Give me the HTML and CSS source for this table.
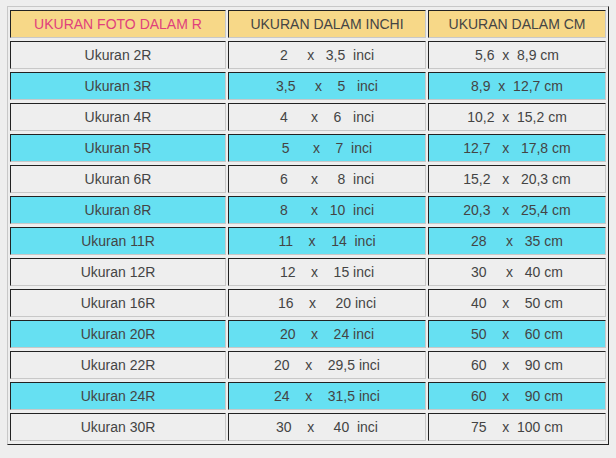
FILE: index.html
```html
<!DOCTYPE html>
<html>
<head>
<meta charset="utf-8">
<link rel="stylesheet" href="styles.css">
</head>
<body>
<table class="sizes">
  <thead>
    <tr class="head">
      <th class="c1 accent">UKURAN FOTO DALAM R</th>
      <th class="c2">UKURAN DALAM INCHI</th>
      <th class="c3">UKURAN DALAM CM</th>
    </tr>
  </thead>
  <tbody>
    <tr><td class="c1">Ukuran 2R</td><td class="c2">2     x   3,5  inci</td><td class="c3">5,6  x  8,9 cm</td></tr>
    <tr class="hi"><td class="c1">Ukuran 3R</td><td class="c2">3,5     x    5   inci</td><td class="c3">8,9  x  12,7 cm</td></tr>
    <tr><td class="c1">Ukuran 4R</td><td class="c2">4      x    6   inci</td><td class="c3">10,2  x  15,2 cm</td></tr>
    <tr class="hi"><td class="c1">Ukuran 5R</td><td class="c2">5      x    7  inci</td><td class="c3">12,7   x   17,8 cm</td></tr>
    <tr><td class="c1">Ukuran 6R</td><td class="c2">6      x     8  inci</td><td class="c3">15,2   x   20,3 cm</td></tr>
    <tr class="hi"><td class="c1">Ukuran 8R</td><td class="c2">8      x   10  inci</td><td class="c3">20,3   x   25,4 cm</td></tr>
    <tr class="hi"><td class="c1">Ukuran 11R</td><td class="c2">11    x    14  inci</td><td class="c3">28     x   35 cm</td></tr>
    <tr><td class="c1">Ukuran 12R</td><td class="c2">12    x    15 inci</td><td class="c3">30     x   40 cm</td></tr>
    <tr><td class="c1">Ukuran 16R</td><td class="c2">16    x     20 inci</td><td class="c3">40    x    50 cm</td></tr>
    <tr class="hi"><td class="c1">Ukuran 20R</td><td class="c2">20    x    24 inci</td><td class="c3">50    x    60 cm</td></tr>
    <tr><td class="c1">Ukuran 22R</td><td class="c2">20    x    29,5 inci</td><td class="c3">60    x    90 cm</td></tr>
    <tr class="hi"><td class="c1">Ukuran 24R</td><td class="c2">24    x    31,5 inci</td><td class="c3">60    x    90 cm</td></tr>
    <tr><td class="c1">Ukuran 30R</td><td class="c2">30    x     40  inci</td><td class="c3">75    x  100 cm</td></tr>
  </tbody>
</table>
</body>
</html>
```

FILE: styles.css
```css
html, body {
  background: #eeeeee;
}
body {
  margin: 6px 7px;
  font-family: "Liberation Sans", Arial, sans-serif;
  font-size: 14px;
  color: #444444;
}
.sizes {
  border-collapse: separate;
  border-spacing: 2px 3px;
  border: 1px solid;
  border-color: #c8c8c8 #222222 #222222 #c8c8c8;
}
.sizes th,
.sizes td {
  border: 1px solid;
  border-color: #222222 #c8c8c8 #c8c8c8 #222222;
  padding: 1px 0 0;
  height: 25px;
  line-height: 25px;
  text-align: center;
  white-space: pre;
  font-weight: normal;
  background: #eeeeee;
}
.sizes .c1 { width: 214px; }
.sizes .c2 { width: 196px; }
.sizes .c3 { width: 176px; }
.sizes .head th {
  background: #f7d888;
  color: #444444;
}
.sizes .head th.accent {
  color: #e0407c;
}
.sizes .hi td {
  background: #66e0f2;
}
```
